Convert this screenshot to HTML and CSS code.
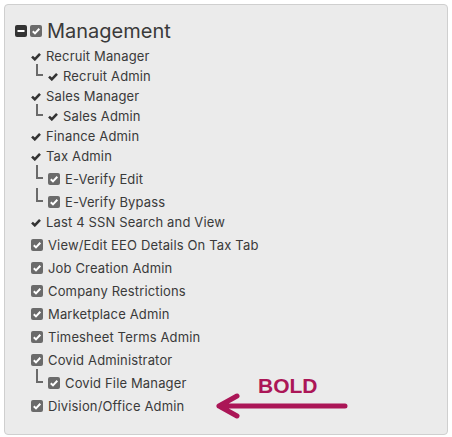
FILE: index.html
```html
<!DOCTYPE html>
<html lang="en">
<head>
  <meta charset="UTF-8" />
  <meta name="viewport" content="width=device-width, initial-scale=1" />
  <title>Permissions</title>
  <link rel="stylesheet" href="styles.css">
</head>
<body>
  <div class="panel">
    <div class="root">
      <svg class="ico" viewBox="0 0 12 12"><rect x="0" y="0" width="12" height="12" rx="2" fill="#333"/><rect x="2.5" y="5" width="7" height="2" fill="#fff"/></svg>
      <svg class="ico" viewBox="0 0 12 12"><rect x="0" y="0" width="12" height="12" rx="2" fill="#6b6b6b"/><path d="M2.8 6.2 L5 8.4 L9.3 3.8" stroke="#fff" stroke-width="2" fill="none"/></svg>
      <span class="root-label">Management</span>
    </div>

    <ul class="perms">
      <li class="row tick">Recruit Manager</li>
      <li class="row tick sub"><span class="elbow"></span>Recruit Admin</li>
      <li class="row tick">Sales Manager</li>
      <li class="row tick sub"><span class="elbow"></span>Sales Admin</li>
      <li class="row tick">Finance Admin</li>
      <li class="row tick">Tax Admin</li>
      <li class="row box sub"><span class="elbow"></span>E-Verify Edit</li>
      <li class="row box sub"><span class="elbow"></span>E-Verify Bypass</li>
      <li class="row tick">Last 4 SSN Search and View</li>
      <li class="row box">View/Edit EEO Details On Tax Tab</li>
      <li class="row box">Job Creation Admin</li>
      <li class="row box">Company Restrictions</li>
      <li class="row box">Marketplace Admin</li>
      <li class="row box">Timesheet Terms Admin</li>
      <li class="row box">Covid Administrator</li>
      <li class="row box sub"><span class="elbow"></span>Covid File Manager</li>
      <li class="row box">Division/Office Admin</li>
    </ul>

    <div class="note">
      <span class="note-text">BOLD</span>
      <svg class="note-arrow" viewBox="0 0 140 30"><path d="M130 15 H4 M4 15 L22 5 M4 15 L22 25" stroke="#ab1657" stroke-width="5" stroke-linecap="round" fill="none"/></svg>
    </div>
  </div>
</body>
</html>
```

FILE: styles.css
```css
* {
  box-sizing: border-box;
}

body {
  margin: 0;
  font-family: "Inter", "Open Sans", sans-serif;
  color: #3a3a3a;
  background: #fff;
}

.panel {
  position: relative;
  margin: 4px;
  width: 444px;
  height: 431px;
  background: #ebebeb;
  border: 1px solid #cfcfcf;
  border-radius: 4px;
  padding: 14px 10px 0 10px;
}

.root {
  display: flex;
  align-items: center;
  gap: 3px;
  height: 24px;
}

.ico {
  width: 12px;
  height: 12px;
  flex: none;
}

.root-label {
  font-size: 20px;
  margin-left: 2px;
}

.perms {
  list-style: none;
  margin: 3px 0 0 0;
  padding: 0 0 0 16px;
  font-size: 13px;
  letter-spacing: 0.15px;
}

.row {
  display: flex;
  align-items: center;
  height: 20px;
}

.row.box {
  height: 23px;
  padding-top: 3px;
}

.row::before {
  content: "";
  flex: none;
  margin-right: 5px;
}

.row.tick::before {
  width: 10px;
  height: 9px;
  background: url("data:image/svg+xml;utf8,<svg xmlns='http://www.w3.org/2000/svg' viewBox='0 0 10 9'><path d='M1 4.6 L3.8 7.3 L9 1.8' stroke='%23333' stroke-width='2.6' fill='none'/></svg>") no-repeat center;
}

.row.box::before {
  width: 12px;
  height: 12px;
  background: url("data:image/svg+xml;utf8,<svg xmlns='http://www.w3.org/2000/svg' viewBox='0 0 12 12'><rect width='12' height='12' rx='2' fill='%236b6b6b'/><path d='M2.8 6.2 L5 8.4 L9.3 3.8' stroke='white' stroke-width='2' fill='none'/></svg>") no-repeat center;
}

.row.sub {
  padding-left: 5px;
}

.elbow {
  order: -1;
  align-self: flex-start;
  flex: none;
  width: 7px;
  height: 12px;
  margin-top: -2px;
  margin-right: 5px;
  border-left: 2px solid #6a6a6a;
  border-bottom: 2px solid #6a6a6a;
}

.row.box .elbow {
  height: 14px;
  margin-top: -4px;
}

.note {
  position: absolute;
  left: 210px;
  top: 369px;
  width: 140px;
}

.note-text {
  display: block;
  margin-left: 43px;
  font-family: "Liberation Sans", Arial, sans-serif;
  font-weight: bold;
  font-size: 21px;
  color: #ab1657;
}

.note-arrow {
  display: block;
  width: 140px;
  height: 30px;
  margin-top: -7px;
}
```
